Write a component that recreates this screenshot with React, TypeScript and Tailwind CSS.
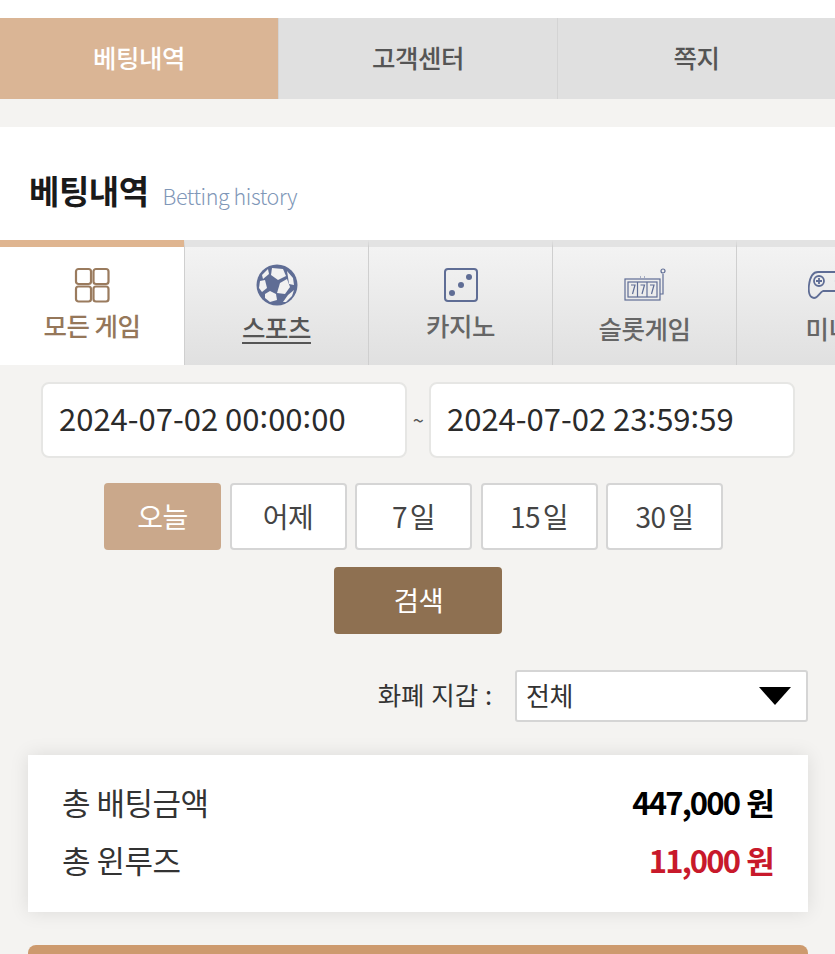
import type { ReactNode } from 'react'

const font = { fontFamily: '"Noto Sans CJK KR", "Noto Sans", sans-serif' }

function AllIcon() {
  return (
    <svg width="36" height="36" viewBox="0 0 36 36" fill="none" stroke="#9a7b5e" strokeWidth="2.2">
      <rect x="2" y="2" width="15" height="15" rx="2.500" />
      <rect x="19.500" y="2" width="15" height="15" rx="2.500" />
      <rect x="2" y="19.500" width="15" height="15" rx="2.500" />
      <rect x="19.500" y="19.500" width="15" height="15" rx="2.500" />
    </svg>
  )
}

function BallIcon() {
  return (
    <svg width="42" height="42" viewBox="0 0 42 42" fill="#f1f1f1">
      <circle cx="21" cy="21" r="20.500" fill="#5f6d95" />
      <polygon points="16,4 27,5 30,12 22,16 15,11" />
      <polygon points="12,5 13,10 7,15 6,11" />
      <polygon points="31,7 37,14 38,21 33,20 32,13" />
      <polygon points="24,19 31,15 34,23 29,30 21,29" />
      <polygon points="4,17 9,16 11,24 6,28 3,24" />
      <polygon points="9,30 14,27 20,30 21,36 14,38 9,34" />
      <polygon points="32,31 38,26 36,32 30,38 27,38" />
    </svg>
  )
}

function DiceIcon() {
  return (
    <svg width="36" height="36" viewBox="0 0 36 36">
      <rect x="2" y="2" width="32" height="32" rx="3" fill="none" stroke="#5f6d95" strokeWidth="2" />
      <circle cx="26" cy="10" r="3" fill="#5f6d95" />
      <circle cx="18" cy="18" r="3" fill="#5f6d95" />
      <circle cx="9" cy="26" r="3" fill="#5f6d95" />
    </svg>
  )
}

function SlotIcon() {
  return (
    <svg width="42" height="34" viewBox="0 0 42 34" fill="none" stroke="#5f6d95" strokeWidth="1.200">
      <rect x="1" y="11" width="35" height="21" />
      <rect x="4" y="14" width="29" height="15" />
      <line x1="13.500" y1="14" x2="13.500" y2="29" />
      <line x1="23" y1="14" x2="23" y2="29" />
      <path d="M7 17h4l-2.500 9M16.500 17h4l-2.500 9M26 17h4l-2.500 9" />
      <path d="M36 26h3V6" />
      <circle cx="39" cy="3" r="2" />
      <path d="M16 9h1M20 9h1" />
    </svg>
  )
}

function PadIcon() {
  return (
    <svg width="42" height="30" viewBox="0 0 42 30" fill="none" stroke="#5f6d95" strokeWidth="1.800">
      <path d="M10 2h22c5 0 8 5 9 13s-1 13-5 13-6-6-9-7H15c-3 1-5 7-9 7s-6-5-5-13 4-13 9-13z" />
      <circle cx="11" cy="11" r="5" />
      <path d="M11 8v6M8 11h6" />
      <circle cx="29" cy="11" r="1.200" fill="#5f6d95" />
    </svg>
  )
}

const games: { label: string; icon: ReactNode; iconBox: string; labelBox: string }[] = [
  { label: '모든 게임', icon: <AllIcon />, iconBox: 'h-[56px]', labelBox: 'mt-[3px] text-[#95775a]' },
  { label: '스포츠', icon: <BallIcon />, iconBox: 'h-[59px]', labelBox: 'mt-[2px] text-[#555] underline underline-offset-4' },
  { label: '카지노', icon: <DiceIcon />, iconBox: 'h-[56px]', labelBox: 'mt-[3px] text-[#666]' },
  { label: '슬롯게임', icon: <SlotIcon />, iconBox: 'h-[55px]', labelBox: 'mt-[7px] text-[#666]' },
  { label: '미니', icon: <PadIcon />, iconBox: 'h-[53px]', labelBox: 'mt-[9px] text-[#666]' },
]

const ranges = ['오늘', '어제', '7 일', '15 일', '30 일']

function DateBox({ date, parts }: { date: string; parts: string[] }) {
  return (
    <div className="flex h-[76px] w-[366px] items-center rounded-[8px] border-2 border-[#e6e6e4] bg-white pb-[7px] pl-[16px] text-[31px] tracking-normal whitespace-pre text-[#2b2b2b]">
      <span>
        {date} {parts[0]}
        <span className="align-[3px]">:</span>
        {parts[1]}
        <span className="align-[3px]">:</span>
        {parts[2]}
      </span>
    </div>
  )
}

function App() {
  return (
    <div style={font} className="h-[954px] w-[835px] overflow-hidden bg-[#f4f3f1] tracking-[-0.03em]">
      <div className="h-[18px] bg-white" />

      <div className="grid h-[81px] grid-cols-[278px_279px_278px] pb-[3px] text-[25.500px] font-medium text-[#555]">
        <div className="-mb-[3px] flex items-center justify-center bg-[#dab595] pb-[3px] text-white">베팅내역</div>
        <div className="-mb-[3px] flex items-center justify-center border-l border-[#d4d4d4] bg-[#e0e0e0] pb-[3px]">고객센터</div>
        <div className="-mb-[3px] flex items-center justify-center border-l border-[#d4d4d4] bg-[#e0e0e0] pb-[3px]">쪽지</div>
      </div>

      <div className="mt-[28px] flex h-[113px] items-center gap-[14px] bg-white pl-[29px] pt-[15px]">
        <h1 className="text-[33px] font-bold text-[#1a1a1a]">베팅내역</h1>
        <span className="mt-[10px] text-[21.500px] font-light tracking-[-0.02em] text-[#7f97b8]">Betting history</span>
      </div>

      <div className="flex h-[125px] overflow-hidden">
        {games.map((g, i) => (
          <div
            key={g.label}
            className={
              i === 0
                ? 'flex w-[184px] shrink-0 flex-col items-center border-t-[7px] border-[#dfb590] bg-white'
                : 'flex w-[184px] shrink-0 flex-col items-center border-t-[7px] border-l border-t-[#e3e3e3] border-l-[#cfcfcf] bg-gradient-to-b from-[#f3f3f3] to-[#e0e0e0]'
            }
          >
            <div className={`flex w-full items-end justify-center ${g.iconBox}`}>{g.icon}</div>
            <span className={`whitespace-nowrap text-[25.500px] font-medium ${g.labelBox}`}>{g.label}</span>
          </div>
        ))}
      </div>

      <div className="mt-[17px] flex items-center pl-[41px]">
        <DateBox date="2024-07-02" parts={['00', '00', '00']} />
        <span className="w-[22px] text-center text-[20px] text-[#555]">~</span>
        <DateBox date="2024-07-02" parts={['23', '59', '59']} />
      </div>

      <div className="mt-[25px] flex justify-center gap-[8.500px] pr-[8px]">
        {ranges.map((r, i) => (
          <button
            key={r}
            className={
              i === 0
                ? 'h-[67px] w-[117px] rounded-[4px] bg-[#caa88b] pb-[2px] text-[28px] text-white'
                : 'h-[67px] w-[117px] rounded-[4px] border-2 border-[#d5d5d5] bg-white pb-[2px] text-[28px] text-[#444] [word-spacing:-3px]'
            }
          >
            {r}
          </button>
        ))}
      </div>

      <div className="mt-[17px] flex justify-center">
        <button className="h-[67px] w-[168px] rounded-[4px] bg-[#8e7051] pb-[2px] pl-[2px] text-[27.500px] text-white">검색</button>
      </div>

      <div className="mt-[36px] flex items-center justify-end pr-[27px]">
        <span className="mr-[23px] pb-[3px] text-[25.500px] tracking-normal text-[#333] [word-spacing:1px]">화폐 지갑 :</span>
        <div className="flex h-[52px] w-[293px] items-center justify-between rounded-[3px] border-2 border-[#d5d5d5] bg-white pb-[3px] pl-[9px] pr-[15px] text-[26px] text-[#333]">
          전체
          <svg width="32" height="18" viewBox="0 0 32 18" className="mt-[3px]">
            <polygon points="0,0 32,0 16,18" fill="#000" />
          </svg>
        </div>
      </div>

      <div className="ml-[28px] mt-[33px] flex h-[157px] w-[780px] flex-col justify-center gap-[12px] bg-white pb-[5px] pl-[34px] pr-[35px] text-[31px] shadow-[0_0_18px_rgba(0,0,0,0.1)]">
        <div className="flex items-center justify-between">
          <span className="text-[#333]">총 배팅금액</span>
          <span className="font-bold tracking-[-0.06em] text-black [word-spacing:2px]">447,000 원</span>
        </div>
        <div className="flex items-center justify-between">
          <span className="text-[#333]">총 윈루즈</span>
          <span className="font-bold tracking-[-0.06em] text-[#c8192b] [word-spacing:2px]">11,000 원</span>
        </div>
      </div>

      <div className="ml-[28px] mt-[33px] h-[30px] w-[780px] rounded-t-[8px] bg-[#cd9a6e]" />
    </div>
  )
}

export default App
